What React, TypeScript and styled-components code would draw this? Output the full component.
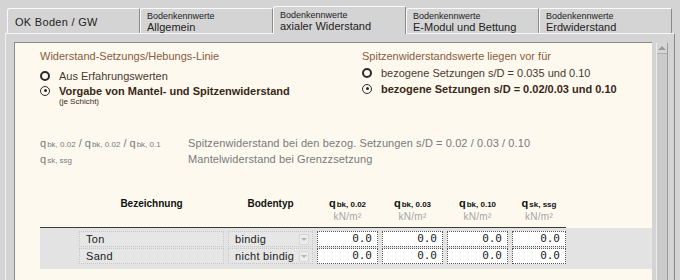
import React from 'react';
import styled, { createGlobalStyle } from 'styled-components';

const GlobalStyle = createGlobalStyle`
  html, body {
    margin: 0;
    padding: 0;
    background: #d4d4d4;
  }
  body {
    font-family: "Liberation Sans", Arial, sans-serif;
    color: #222;
  }
`;

const Window = styled.div`
  width: 680px;
  height: 280px;
  overflow: hidden;
  background: #d4d4d4;
`;

const TabBar = styled.div`
  display: flex;
  align-items: flex-end;
  height: 33px;
  padding-left: 7px;
  box-sizing: border-box;
`;

const Tab = styled.div<{ $active?: boolean }>`
  position: relative;
  z-index: ${(p) => (p.$active ? 2 : 0)};
  width: 133px;
  height: ${(p) => (p.$active ? 28 : 25)}px;
  margin-bottom: ${(p) => (p.$active ? -1 : 0)}px;
  box-sizing: border-box;
  border-top: 1px solid #fafafa;
  border-left: 1px solid #fafafa;
  border-right: 1px solid #8a8a8a;
  border-top-left-radius: 3px;
  border-top-right-radius: 2px;
  background: #d4d4d4;
  padding: ${(p) => (p.$active ? '3px' : '2px')} 6px 0;
  display: flex;
  flex-direction: column;
  justify-content: ${(p) => (p.$active ? 'flex-start' : 'center')};
`;

const TabSmall = styled.div`
  font-size: 9px;
  line-height: 10px;
  color: #222;
`;

const TabLabel = styled.div<{ $single?: boolean }>`
  font-size: 11px;
  line-height: 12px;
  color: #222;
  padding-left: ${(p) => (p.$single ? 1 : 0)}px;
  letter-spacing: ${(p) => (p.$single ? '0.3px' : '0')};
`;

const Panel = styled.div`
  margin-left: 5px;
  width: 670px;
  height: 248px;
  box-sizing: border-box;
  border-top: 1px solid #f6f6f6;
  border-left: 1px solid #f0f0f0;
  border-right: 1px solid #8a8a8a;
  padding: 8px 6px 0 8px;
  display: flex;
  gap: 4px;
`;

const Frame = styled.div`
  flex: 1;
  border-top: 1px solid #8c8c8c;
  border-left: 1px solid #8c8c8c;
  background: #fdf9ef;
  padding: 6px 0 0 25px;
  box-sizing: border-box;
`;

const ScrollBar = styled.div`
  width: 12px;
  margin-top: 1px;
  box-sizing: border-box;
  background: #cbcbcb;
  border-left: 1px solid #ececec;
  border-right: 1px solid #9a9a9a;
`;

const ScrollUp = styled.div`
  height: 11px;
  box-sizing: border-box;
  border-bottom: 1px solid #b0b0b0;
  background: #d6d6d6;
  display: flex;
  align-items: center;
  justify-content: center;

  &::after {
    content: '';
    border-left: 4px solid transparent;
    border-right: 4px solid transparent;
    border-bottom: 4px solid #9a9a9a;
  }
`;

const Options = styled.div`
  display: grid;
  grid-template-columns: 322px 1fr;
`;

const Group = styled.div``;

const GroupTitle = styled.div`
  font-size: 11px;
  line-height: 14px;
  color: #8a5b3c;
`;

const RadioRow = styled.div<{ $top: number }>`
  display: flex;
  align-items: center;
  height: 15px;
  margin-top: ${(p) => p.$top}px;
`;

const Radio = styled.span<{ $checked?: boolean }>`
  position: relative;
  width: 10px;
  height: 10px;
  box-sizing: border-box;
  border-radius: 50%;
  border: ${(p) => (p.$checked ? '1.5px' : '2px')} solid #2b2b2b;
  margin-right: 9px;
  flex: none;

  &::after {
    content: '';
    display: ${(p) => (p.$checked ? 'block' : 'none')};
    position: absolute;
    left: 50%;
    top: 50%;
    width: 3px;
    height: 3px;
    margin: -1.5px 0 0 -1.5px;
    border-radius: 50%;
    background: #2b2b2b;
  }
`;

const RadioText = styled.span<{ $bold?: boolean }>`
  font-size: 11px;
  color: ${(p) => (p.$bold ? '#3a2716' : '#4a3a2e')};
  font-weight: ${(p) => (p.$bold ? 700 : 400)};
  white-space: nowrap;
`;

const Hint = styled.div`
  font-size: 8px;
  line-height: 9px;
  color: #3a2716;
  margin: -1px 0 0 19px;
`;

const Legend = styled.div`
  display: grid;
  grid-template-columns: 148px 1fr;
  grid-auto-rows: 16px;
  align-items: center;
  margin-top: 29px;
  color: #7a7a7a;
  font-size: 11px;
`;

const Sym = styled.span<{ $bold?: boolean; $size?: number }>`
  font-size: ${(p) => p.$size ?? 11}px;
  font-weight: ${(p) => (p.$bold ? 700 : 400)};
  white-space: nowrap;
`;

const Sub = styled.span<{ $bold?: boolean }>`
  font-size: 8px;
  font-weight: ${(p) => (p.$bold ? 700 : 400)};
  margin-left: 1px;
`;

const Desc = styled.span`
  white-space: nowrap;
  letter-spacing: 0.1px;
`;

const Table = styled.div`
  margin-top: 30px;
`;

const Cols = `
  display: grid;
  grid-template-columns: 35px 145px 85px 61px 61px 61px 54px;
  column-gap: 4px;
`;

const HeaderRow = styled.div`
  ${Cols}
  width: 526px;
  height: 30px;
  border-bottom: 1px solid #3a3a3a;
  align-items: start;
`;

const HeadText = styled.div`
  font-size: 10px;
  font-weight: 700;
  line-height: 13px;
  color: #111;
  text-align: center;
`;

const HeadQ = styled.div`
  display: flex;
  flex-direction: column;
  align-items: center;
`;

const Unit = styled.div`
  font-size: 10px;
  line-height: 12px;
  color: #a5a5a5;
  letter-spacing: 0.3px;
`;

const Band = styled.div`
  background: #e3e3e3;
  padding: 3px 0 5px;
  display: flex;
  flex-direction: column;
  gap: 1px;
`;

const Row = styled.div`
  ${Cols}
  height: 16px;
`;

const Cell = styled.div`
  box-sizing: border-box;
  height: 16px;
  border: 1px dotted #c6c6c6;
  background: #e6e6e6;
  font-size: 11px;
  line-height: 14px;
  padding-left: 6px;
  color: #222;
  letter-spacing: 0.3px;
  display: flex;
  align-items: center;
  justify-content: space-between;
`;

const DropArrow = styled.span`
  width: 10px;
  height: 11px;
  box-sizing: border-box;
  margin-right: 3px;
  border: 1px solid #d8d8d8;
  background: #ececec;
  display: flex;
  align-items: center;
  justify-content: center;

  &::after {
    content: '';
    border-left: 3px solid transparent;
    border-right: 3px solid transparent;
    border-top: 3px solid #b4b4b4;
  }
`;

const Input = styled.div`
  box-sizing: border-box;
  height: 16px;
  border: 1px dotted #555;
  background: #fff;
  font-family: "DejaVu Sans Mono", "Liberation Mono", monospace;
  font-size: 11px;
  line-height: 14px;
  text-align: right;
  padding-right: 5px;
  color: #222;
`;

const soils = [
  { name: 'Ton', type: 'bindig' },
  { name: 'Sand', type: 'nicht bindig' },
];

const qCols = ['bk, 0.02', 'bk, 0.03', 'bk, 0.10', 'sk, ssg'];

export default function App() {
  return (
    <Window>
      <GlobalStyle />
      <TabBar>
        <Tab>
          <TabLabel $single>OK Boden / GW</TabLabel>
        </Tab>
        <Tab>
          <TabSmall>Bodenkennwerte</TabSmall>
          <TabLabel>Allgemein</TabLabel>
        </Tab>
        <Tab $active>
          <TabSmall>Bodenkennwerte</TabSmall>
          <TabLabel>axialer Widerstand</TabLabel>
        </Tab>
        <Tab>
          <TabSmall>Bodenkennwerte</TabSmall>
          <TabLabel>E-Modul und Bettung</TabLabel>
        </Tab>
        <Tab>
          <TabSmall>Bodenkennwerte</TabSmall>
          <TabLabel>Erdwiderstand</TabLabel>
        </Tab>
      </TabBar>
      <Panel>
        <Frame>
          <Options>
            <Group>
              <GroupTitle>Widerstand-Setzungs/Hebungs-Linie</GroupTitle>
              <RadioRow $top={5}>
                <Radio />
                <RadioText>Aus Erfahrungswerten</RadioText>
              </RadioRow>
              <RadioRow $top={0}>
                <Radio $checked />
                <RadioText $bold>Vorgabe von Mantel- und Spitzenwiderstand</RadioText>
              </RadioRow>
              <Hint>(je Schicht)</Hint>
            </Group>
            <Group>
              <GroupTitle>Spitzenwiderstandswerte liegen vor für</GroupTitle>
              <RadioRow $top={2}>
                <Radio />
                <RadioText>bezogene Setzungen s/D = 0.035 und 0.10</RadioText>
              </RadioRow>
              <RadioRow $top={1}>
                <Radio $checked />
                <RadioText $bold>bezogene Setzungen s/D = 0.02/0.03 und 0.10</RadioText>
              </RadioRow>
            </Group>
          </Options>

          <Legend>
            <Sym>
              q<Sub>bk, 0.02</Sub> / q<Sub>bk, 0.02</Sub> / q<Sub>bk, 0.1</Sub>
            </Sym>
            <Desc>Spitzenwiderstand bei den bezog. Setzungen s/D = 0.02 / 0.03 / 0.10</Desc>
            <Sym>
              q<Sub>sk, ssg</Sub>
            </Sym>
            <Desc>Mantelwiderstand bei Grenzzsetzung</Desc>
          </Legend>

          <Table>
            <HeaderRow>
              <span />
              <HeadText>Bezeichnung</HeadText>
              <HeadText>Bodentyp</HeadText>
              {qCols.map((c) => (
                <HeadQ key={c}>
                  <HeadText>
                    <Sym $bold $size={11}>q</Sym>
                    <Sub $bold>{c}</Sub>
                  </HeadText>
                  <Unit>kN/m²</Unit>
                </HeadQ>
              ))}
            </HeaderRow>
            <Band>
              {soils.map((s) => (
                <Row key={s.name}>
                  <span />
                  <Cell>{s.name}</Cell>
                  <Cell>
                    {s.type}
                    <DropArrow />
                  </Cell>
                  {qCols.map((c) => (
                    <Input key={c}>0.0</Input>
                  ))}
                </Row>
              ))}
            </Band>
          </Table>
        </Frame>
        <ScrollBar>
          <ScrollUp />
        </ScrollBar>
      </Panel>
    </Window>
  );
}
